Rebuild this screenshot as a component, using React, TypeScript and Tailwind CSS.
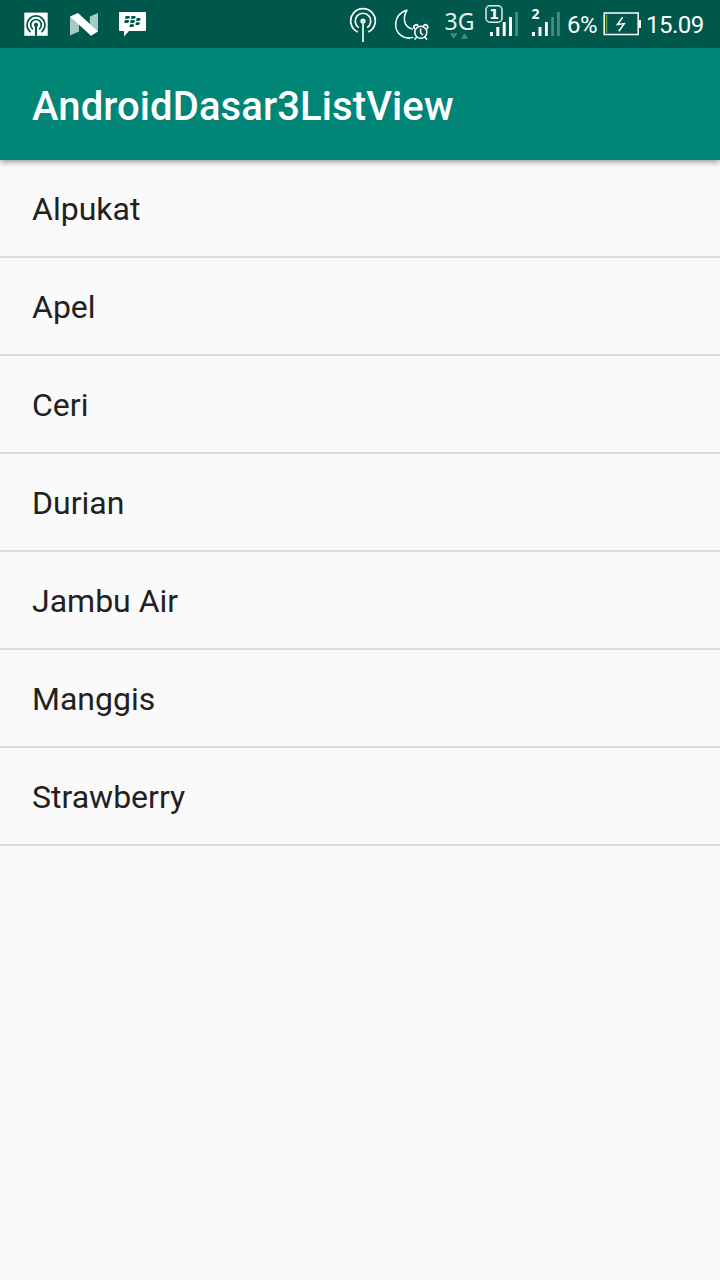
const fruits = ['Alpukat', 'Apel', 'Ceri', 'Durian', 'Jambu Air', 'Manggis', 'Strawberry'];

function HotspotBadge() {
  return (
    <svg width="24" height="48" viewBox="24 0 24 48" fill="none" stroke="#00574b" strokeLinecap="round">
      <rect x="24.3" y="12.6" width="23.4" height="23.2" fill="#fff" stroke="none" />
      <path d="M30 31.6A9 9 0 1 1 42 31.6" strokeWidth="1.8" />
      <path d="M32.5 28.8A5.3 5.3 0 1 1 39.5 28.8" strokeWidth="1.7" />
      <circle cx="36" cy="24.9" r="2.1" fill="#00574b" stroke="none" />
      <path d="M36 25V35.8" strokeWidth="2.1" strokeLinecap="butt" />
    </svg>
  );
}

function NougatIcon() {
  return (
    <svg width="28" height="48" viewBox="70 0 28 48">
      <path d="M70 16.5L79 20V31.4L70 35.4Z" fill="#a6c9c3" />
      <path d="M89.8 16.5L98 13V31.5L89.8 28Z" fill="#a6c9c3" />
      <path d="M70 16.5L78 12.9L98 31.5L91 35.7Z" fill="#fff" />
    </svg>
  );
}

function MessengerIcon() {
  return (
    <svg width="28" height="48" viewBox="118 0 28 48">
      <path d="M119.3 12H145.2Q146 12 146 12.8V30.2Q146 31 145.2 31H129L124 36.5V31H119.8Q119 31 119 30.2V12.8Q119 12 119.8 12Z" fill="#fff" />
      <g fill="#00574b">
        <path d="M125.6 16H128.6Q130 16 129.8 17.2Q129.5 18.8 127.9 18.8H125Z" />
        <path d="M131.4 16H134.4Q135.8 16 135.6 17.2Q135.3 18.8 133.7 18.8H130.8Z" />
        <path d="M124.9 20.1H127.9Q129.3 20.1 129.1 21.3Q128.8 22.9 127.2 22.9H124.3Z" />
        <path d="M130.7 20.1H133.7Q135.1 20.1 134.9 21.3Q134.6 22.9 133 22.9H130.1Z" />
        <path d="M136.7 18.1H139.3Q140.7 18.1 140.5 19.3Q140.2 20.9 138.6 20.9H136.1Z" />
        <path d="M136 22.3H138.6Q140 22.3 139.8 23.5Q139.5 25.1 137.9 25.1H135.4Z" />
        <path d="M130 24.3H133Q134.4 24.3 134.2 25.5Q133.9 27.1 132.3 27.1H129.4Z" />
      </g>
    </svg>
  );
}

function TetherIcon() {
  return (
    <svg width="28" height="48" viewBox="349 0 28 48" fill="none" stroke="#fff">
      <path d="M357.8 32.1A12.3 12.3 0 1 1 368.2 32.1" strokeWidth="1.7" />
      <path d="M358.8 27.6A7.8 7.8 0 1 1 367.2 27.6" strokeWidth="1.7" />
      <circle cx="363" cy="21" r="2.6" fill="#fff" stroke="none" />
      <path d="M363 21V42" strokeWidth="2" stroke="#cde2de" />
    </svg>
  );
}

function SleepAlarmIcon() {
  return (
    <svg width="36" height="48" viewBox="394 0 36 48" fill="none" stroke="#fff" strokeWidth="1.5" strokeLinecap="round" strokeLinejoin="round">
      <path d="M412.7 37.4C404 40.3 395.7 33.3 395.7 25C395.7 17.3 400.3 11.8 407 10.2C402 18.5 404.3 27 412.3 29" />
      <circle cx="420.8" cy="32.3" r="6" />
      <path d="M420.6 29V32.8L422.4 34.6M416.6 37.2L415 39.1M425 37.2L426.6 39.1" />
      <path d="M414.5 28.6A2.3 2.3 0 0 1 417.9 25.5M427.1 28.6A2.3 2.3 0 0 0 423.7 25.5" />
    </svg>
  );
}

function NetworkType() {
  return (
    <svg width="30" height="48" viewBox="444 0 30 48">
      <text y="30.2" fill="#e4f0ee" fontSize="23" className="font-['Noto_Sans',sans-serif]">
        <tspan x="444.4">3</tspan>
        <tspan x="457.8">G</tspan>
      </text>
      <path d="M450 33.3H457.5L453.8 38.8ZM461 38.8H468L464.5 33.3Z" fill="#4b8a81" />
    </svg>
  );
}

function SignalOne() {
  return (
    <svg width="34" height="48" viewBox="485 0 34 48">
      <rect x="486" y="5.8" width="16" height="16.4" rx="4" fill="none" stroke="#e4f0ee" strokeWidth="1.5" />
      <text x="494" y="18.9" textAnchor="middle" fontSize="14" fontWeight="700" fill="#fff" className="font-['DejaVu_Sans',sans-serif]">1</text>
      <path d="M490 32h3v4h-3zM496.3 27h3v9h-3zM502.7 22h3v14h-3zM509 17h3v19h-3z" fill="#fff" />
      <path d="M515.2 12h2.8v24h-2.8z" fill="#4b8a81" />
    </svg>
  );
}

function SignalTwo() {
  return (
    <svg width="30" height="48" viewBox="531 0 30 48">
      <text x="531.6" y="18.8" fontSize="14" fontWeight="700" fill="#fff" className="font-['Noto_Sans',sans-serif]">2</text>
      <path d="M532 32h3v4h-3zM538.5 27h3v9h-3zM545 22h2.8v14h-2.8z" fill="#fff" />
      <path d="M551.2 17h2.8v19h-2.8zM557 12h2.8v24h-2.8z" fill="#4b8a81" />
    </svg>
  );
}

function BatteryIcon() {
  return (
    <svg width="38" height="48" viewBox="603 0 38 48">
      <rect x="604.2" y="13" width="34" height="21.5" fill="none" stroke="#fff" strokeWidth="1.5" />
      <path d="M638.5 20H641V28H638.5Z" fill="#fff" />
      <path d="M606 14.8h1.3v18h-1.3z" fill="#5fa62c" />
      <path d="M622.6 17.2L617.5 24.5L624.2 23.6L618.8 31.2" fill="none" stroke="#fff" strokeWidth="1.5" />
    </svg>
  );
}

export default function App() {
  return (
    <div className="flex h-[1280px] w-[720px] flex-col overflow-hidden bg-[#fafafa] font-[Roboto,sans-serif]">
      <header className="relative shadow-[0_2px_6px_rgba(0,0,0,0.4)]">
        <div className="flex h-12 items-center bg-[#00574b] pl-6 text-white">
          <HotspotBadge />
          <div className="ml-[22px]"><NougatIcon /></div>
          <div className="ml-5"><MessengerIcon /></div>
          <div className="ml-[203px]"><TetherIcon /></div>
          <div className="ml-[17px]"><SleepAlarmIcon /></div>
          <div className="ml-[14px]"><NetworkType /></div>
          <div className="ml-[11px]"><SignalOne /></div>
          <div className="ml-3"><SignalTwo /></div>
          <span className="ml-1.5 w-9 pt-0.5 text-2xl tracking-[-0.5px] whitespace-nowrap">6%</span>
          <BatteryIcon />
          <span className="ml-[5px] pt-0.5 text-2xl tracking-[-0.5px]">15.09</span>
        </div>
        <div className="flex h-28 items-center bg-[#008577] pl-8 pt-1.5">
          <h1 className="text-[40px] leading-none font-medium tracking-[0.1px] text-white">AndroidDasar3ListView</h1>
        </div>
      </header>
      <ul>
        {fruits.map((fruit) => (
          <li key={fruit} className="flex h-[98px] items-center border-b-2 border-[#dcdcdc] pl-8 pt-0.5 text-[32px] text-[#212121]">
            {fruit}
          </li>
        ))}
      </ul>
    </div>
  );
}
